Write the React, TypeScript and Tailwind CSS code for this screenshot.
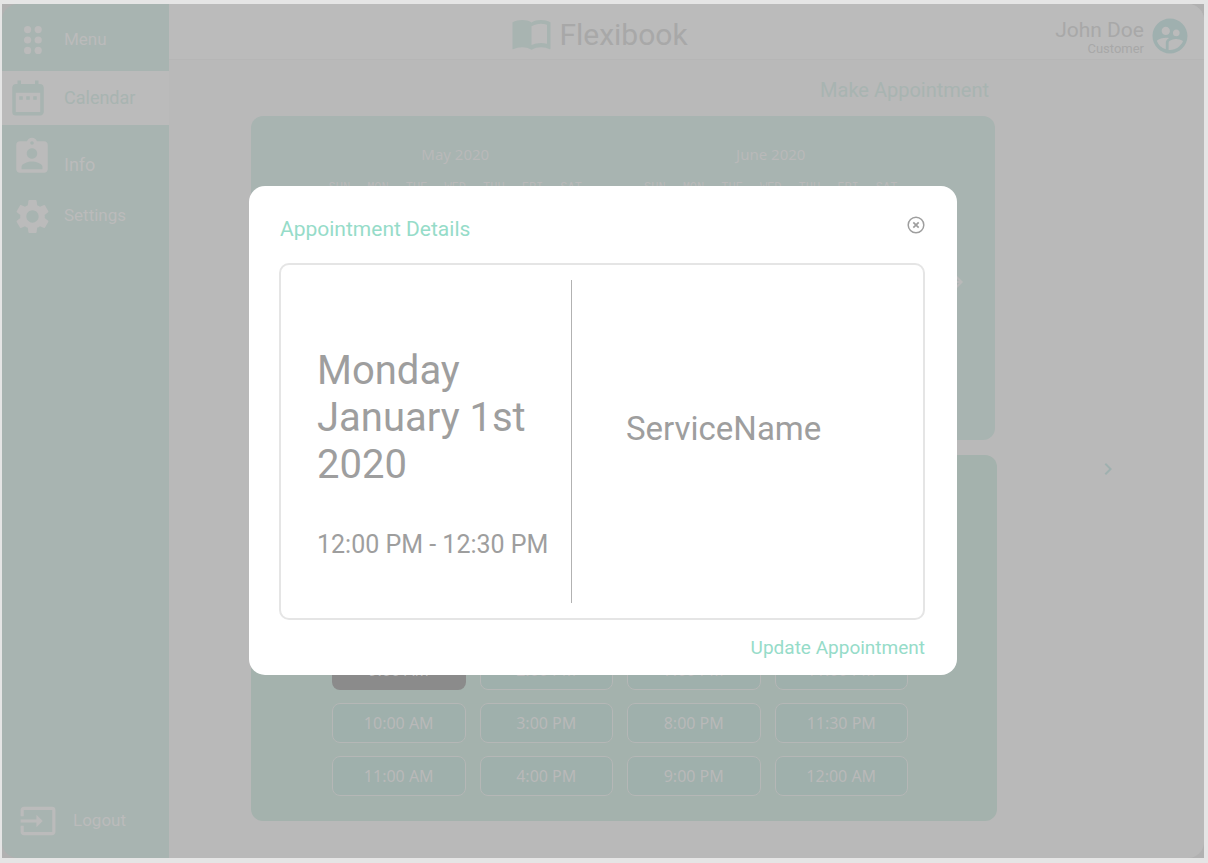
import React from "react";
import {
  MdArrowForward,
  MdAssignmentInd,
  MdDateRange,
  MdInput,
  MdSettings,
  MdSupervisedUserCircle,
  MdChevronRight,
} from "react-icons/md";

const weekdays = ["SUN", "MON", "TUE", "WED", "THU", "FRI", "SAT"];
const months = ["May 2020", "June 2020"];
const slots = [
  "9:00 AM", "2:00 PM", "7:00 PM", "11:00 PM",
  "10:00 AM", "3:00 PM", "8:00 PM", "11:30 PM",
  "11:00 AM", "4:00 PM", "9:00 PM", "12:00 AM",
];

function DotsIcon() {
  return (
    <svg viewBox="0 0 18 28" className="h-7 w-[18px]" fill="currentColor" aria-hidden="true">
      {[3.6, 14, 24.4].map((y) => (
        <g key={y}>
          <circle cx="3.6" cy={y} r="3.6" />
          <circle cx="14.2" cy={y} r="3.6" />
        </g>
      ))}
    </svg>
  );
}

function BookIcon() {
  return (
    <svg viewBox="0 0 38 30" className="h-[30px] w-[39px]" fill="currentColor" aria-hidden="true">
      <path
        fillRule="evenodd"
        d="M0 2.2C3 .8 6.4 0 9.800 0c3.300 0 6.700.7 9.200 2.500C21.800.7 25 0 28.300 0c3.400 0 6.800.8 9.700 2.200v26.600c0 .3-.3.500-.6.400-2.700-1.300-5.800-2-8.800-2-3.100 0-6.900.8-9.600 2.500-2.700-1.700-6.100-2.500-9.200-2.500-3.100 0-6.400.7-9.200 2.100-.3.100-.6-.1-.6-.4zM19 6.200v18.900c2.700-1.500 6.300-2.200 9.400-2.200 2.100 0 4.100.3 6.100.9V4.700c-2-.6-4-.9-6.100-.9-3.100 0-6.700.9-9.400 2.400z"
      />
    </svg>
  );
}

function CloseIcon() {
  return (
    <svg viewBox="0 0 18 18" className="size-[18px]" fill="none" stroke="currentColor" aria-hidden="true">
      <circle cx="9" cy="9" r="7.8" strokeWidth="1.5" />
      <path d="M6.300 6.300l5.400 5.400M11.700 6.300l-5.400 5.400" strokeWidth="1.700" />
    </svg>
  );
}

function Sidebar() {
  return (
    <nav className="flex w-[167px] shrink-0 flex-col rounded-l-2xl bg-[#a8b4b1] text-[#bbbbbb]">
      <button className="flex h-[67px] items-center pt-1 text-left text-[17px]">
        <span className="flex w-[62px] justify-center"><DotsIcon /></span>
        Menu
      </button>
      <a href="#calendar" className="flex h-[54px] items-center bg-[#bbbbbb] text-lg text-[#a8b4b1]">
        <span className="w-[62px] pl-[5px]"><MdDateRange className="size-[42px]" /></span>
        Calendar
      </a>
      <a href="#info" className="flex h-16 items-center text-lg">
        <span className="w-[62px] pl-[9px]"><MdAssignmentInd className="size-[42px]" /></span>
        <span className="pt-4">Info</span>
      </a>
      <a href="#settings" className="flex h-[54px] items-center text-[17px]">
        <span className="w-[62px] pl-[10px]"><MdSettings className="size-[41px]" /></span>
        Settings
      </a>
      <button className="mt-auto mb-4 flex h-[42px] items-center text-left text-[17px]">
        <span className="w-[71px] pl-[17px]"><MdInput className="size-[38px]" /></span>
        Logout
      </button>
    </nav>
  );
}

function Header() {
  return (
    <header className="grid h-14 grid-cols-[1fr_auto_1fr] items-center rounded-tr-2xl border-b border-[#b6b6b6] bg-[#bbbbbb] pr-[13px] text-[#a8a8a8]">
      <div className="col-start-2 mr-[160px] flex items-center gap-2 pt-1.5">
        <span className="text-[#a8b4b1]"><BookIcon /></span>
        <h1 className="text-[30px] leading-10">Flexibook</h1>
      </div>
      <div className="flex items-center justify-end gap-[5px] pt-2">
        <div className="pt-0.5 text-right">
          <p className="text-[21px] leading-6">John Doe</p>
          <p className="text-[13px] leading-[14px]">Customer</p>
        </div>
        <MdSupervisedUserCircle className="size-[42px] text-[#9fb0af]" />
      </div>
    </header>
  );
}

function Months() {
  return (
    <section className="mr-0.5 flex h-[324px] items-start gap-[45px] rounded-xl bg-[#a8b4b1] pr-[28px] pl-[69px] text-[#b9b9b9]">
      {months.map((month) => (
        <div key={month} className="flex-1 pt-7 text-center">
          <h2 className="font-['Noto_Sans',sans-serif] text-[15px] leading-5">{month}</h2>
          <div className="mt-4 grid grid-cols-7 font-['Liberation_Mono',monospace] text-xs leading-4">
            {weekdays.map((day) => (
              <span key={day}>{day}</span>
            ))}
          </div>
        </div>
      ))}
      <button aria-label="Next month" className="-ml-2 flex h-full items-center pt-2">
        <MdArrowForward className="size-6" />
      </button>
    </section>
  );
}

function Slots() {
  return (
    <section className="flex h-[366px] items-end rounded-xl bg-[#a4b2ad] pr-[89px] pb-[25px] pl-[81px]">
      <div className="grid flex-1 grid-cols-4 gap-x-3.5 gap-y-[13px] font-['Noto_Sans',sans-serif] text-base text-[#b9b9b9]">
        {slots.map((slot, i) => (
          <button
            key={slot}
            className={
              i === 0
                ? "h-10 rounded-lg bg-[#8b8b8b]"
                : "h-10 rounded-lg border border-[#b5b7b6] bg-[#9fb0ac]"
            }
          >
            {slot}
          </button>
        ))}
      </div>
    </section>
  );
}

function AppointmentDialog() {
  return (
    <div className="absolute inset-0 flex items-center justify-center pb-0.5">
      <div
        role="dialog"
        aria-labelledby="dialog-title"
        className="w-[708px] max-w-full rounded-2xl bg-white pt-[30px] pr-8 pb-3 pl-[30px]"
      >
        <div className="flex items-start justify-between">
          <h2 id="dialog-title" className="pl-px text-[21px] leading-[26px] text-[#96dcc9]">
            Appointment Details
          </h2>
          <button aria-label="Close" className="text-[#9e9e9e]"><CloseIcon /></button>
        </div>
        <div className="mt-[21px] flex h-[357px] rounded-[10px] border-2 border-[#e5e5e5] py-[15px] text-[#9e9e9e]">
          <div className="flex w-[291px] flex-col border-r border-[#b2b2b2] pt-[67px] pl-9">
            <p className="text-[40px] leading-[47px]">
              Monday<br />January 1st<br />2020
            </p>
            <p className="mt-[41px] text-[25px] leading-8 whitespace-nowrap">12:00 PM - 12:30 PM</p>
          </div>
          <div className="flex flex-1 items-center pb-6 pl-[54px] text-[33px]">ServiceName</div>
        </div>
        <div className="mt-[13px] flex justify-end">
          <button className="text-[19px] leading-[30px] text-[#96dcc9]">Update Appointment</button>
        </div>
      </div>
    </div>
  );
}

export default function App() {
  return (
    <div className="flex min-h-screen bg-[#e5e5e5] pt-1 pr-1 pb-[5px] pl-0.5 font-[Roboto,sans-serif]">
      <div className="relative flex flex-1 bg-[#b1b1b1]">
        <Sidebar />
        <div className="flex flex-1 flex-col rounded-r-2xl bg-[#b9b9b9]">
          <Header />
          <main className="flex flex-1 items-center pr-[84px] pl-[82px]">
            <div className="w-[746px] self-start pt-4">
              <div className="mb-3 flex justify-end pr-2">
                <a href="#make-appointment" className="text-xl leading-7 text-[#a8b4b1]">
                  Make Appointment
                </a>
              </div>
              <Months />
              <div className="mt-[15px]"><Slots /></div>
            </div>
            <button aria-label="Next day" className="ml-auto pt-5 text-[#9fb0af]">
              <MdChevronRight className="size-6" />
            </button>
          </main>
        </div>
        <AppointmentDialog />
      </div>
    </div>
  );
}
